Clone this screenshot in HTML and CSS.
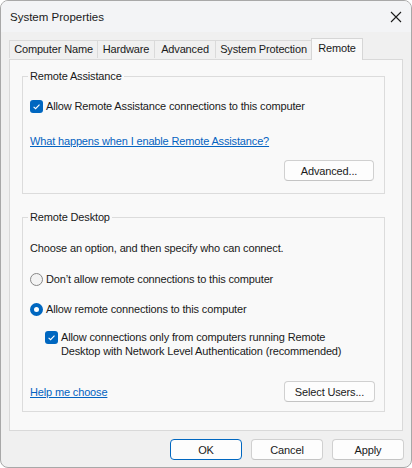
FILE: index.html
```html
<!DOCTYPE html>
<html>
<head>
<meta charset="utf-8">
<link rel="stylesheet" href="styles.css">
</head>
<body>
<div class="window">
  <div class="titlebar">
    <span class="title">System Properties</span>
    <svg class="close" width="12" height="12" viewBox="0 0 12 12"><path d="M1 1 L11 11 M11 1 L1 11" stroke="#1b1b1b" stroke-width="1.1" fill="none"/></svg>
  </div>
  <div class="tabs">
    <div class="tab t1">Computer Name</div>
    <div class="tab t2">Hardware</div>
    <div class="tab t3">Advanced</div>
    <div class="tab t4">System Protection</div>
    <div class="tab selected">Remote</div>
  </div>
  <div class="panel">
    <fieldset class="group g1">
      <legend>Remote Assistance</legend>
      <div class="row check-row r-ra">
        <span class="checkbox"><svg width="13" height="13" viewBox="0 0 13 13"><path d="M3.6 6.8 L5.6 8.7 L9.5 4.6" stroke="#fff" stroke-width="1.1" fill="none"/></svg></span>
        <span class="label">Allow Remote Assistance connections to this computer</span>
      </div>
      <div class="row r-link1"><a class="link">What happens when I enable Remote Assistance?</a></div>
      <div class="btn-row r-adv"><button class="btn">Advanced...</button></div>
    </fieldset>
    <fieldset class="group g2">
      <legend>Remote Desktop</legend>
      <div class="row r-choose">Choose an option, and then specify who can connect.</div>
      <div class="row check-row r-radio1">
        <span class="radio"></span>
        <span class="label">Don’t allow remote connections to this computer</span>
      </div>
      <div class="row check-row r-radio2">
        <span class="radio on"></span>
        <span class="label">Allow remote connections to this computer</span>
      </div>
      <div class="nla">
        <span class="checkbox"><svg width="13" height="13" viewBox="0 0 13 13"><path d="M3.6 6.8 L5.6 8.7 L9.5 4.6" stroke="#fff" stroke-width="1.1" fill="none"/></svg></span>
        <span class="nla-text">Allow connections only from computers running Remote<br>Desktop with Network Level Authentication (recommended)</span>
      </div>
      <div class="help-row">
        <a class="link">Help me choose</a>
        <button class="btn">Select Users...</button>
      </div>
    </fieldset>
  </div>
  <div class="buttons">
    <button class="btn default">OK</button>
    <button class="btn">Cancel</button>
    <button class="btn">Apply</button>
  </div>
</div>
</body>
</html>
```

FILE: styles.css
```css
* { box-sizing: border-box; }
html, body { margin: 0; padding: 0; background: #ffffff; }
body {
  font-family: "Liberation Sans", Arial, sans-serif;
  font-size: 11px;
  letter-spacing: -0.15px;
  color: #1a1a1a;
}
.window {
  width: 412px;
  height: 468px;
  border: 1px solid #a8a8a8;
  border-radius: 8px;
  background: #f0f0f0;
  overflow: hidden;
  display: flex;
  flex-direction: column;
}
.titlebar {
  height: 31px;
  flex: none;
  background: #f3f4f6;
  display: flex;
  align-items: center;
  justify-content: space-between;
  padding: 0 9px 0 9px;
}
.title { font-size: 11.5px; letter-spacing: 0; color: #1a1a1a; }
.close { display: block; margin-top: 1px; }
.tabs {
  display: flex;
  align-items: flex-end;
  height: 21px;
  margin-top: 6px;
  padding-left: 8px;
  position: relative;
  z-index: 1;
}
.tab {
  height: 18px;
  line-height: 17px;
  text-align: center;
  border: 1px solid #dadada;
  border-right: none;
  border-bottom: none;
  background: #f0f0f0;
  white-space: nowrap;
  margin-bottom: 1px;
}
.t1 { width: 88px; }
.t2 { width: 57px; }
.t3 { width: 61px; }
.t4 { width: 97px; border-right: 1px solid #dadada; }
.tab.selected {
  width: 52px;
  height: 22px;
  line-height: 19px;
  border: 1px solid #d6d6d6;
  border-bottom: none;
  background: #f9f9f9;
  margin-bottom: -1px;
  margin-left: -1px;
}
.panel {
  height: 372px;
  margin: 0 8px;
  flex: none;
  border: 1px solid #d9d9d9;
  background: #f9f9f9;
  padding: 8px 17px 0 12px;
}
.group {
  margin: 0;
  padding: 0 0 0 7px;
  border: 1px solid #dcdcdc;
  display: flex;
  flex-direction: column;
}
.group legend {
  margin-left: -2px;
  padding: 0 2px;
  line-height: 16px;
}
.g1 { padding-bottom: 12px; }
.g2 { margin-top: 15px; padding-bottom: 9px; }
.row {
  height: 20px;
  display: flex;
  align-items: center;
  white-space: nowrap;
}
.check-row .label { margin-left: 3px; }
.r-ra { margin-top: 12px; }
.r-link1 { margin-top: 15px; }
.r-adv { margin-top: 9px; }
.btn-row { display: flex; justify-content: flex-end; padding-right: 10px; }
.r-choose { margin-top: 13px; }
.r-radio1 { margin-top: 11px; }
.r-radio2 { margin-top: 10px; }
.checkbox {
  width: 13px;
  height: 13px;
  border-radius: 3px;
  background: #0067c0;
  flex: none;
  display: block;
}
.checkbox svg { display: block; }
.radio {
  width: 13px;
  height: 13px;
  border-radius: 50%;
  border: 1px solid #878787;
  background: #f3f3f3;
  flex: none;
  display: block;
}
.radio.on {
  border: 4px solid #0067c0;
  background: #ffffff;
}
.link {
  color: #0463c1;
  text-decoration: underline;
  cursor: pointer;
}
.nla {
  display: flex;
  align-items: flex-start;
  margin-top: 12px;
  padding-left: 15px;
}
.nla-text { line-height: 14px; margin-left: 3px; margin-top: -1px; white-space: nowrap; }
.help-row {
  display: flex;
  justify-content: space-between;
  align-items: center;
  margin-top: 23px;
  padding-right: 9px;
}
.btn {
  font-family: inherit;
  font-size: 11px;
  letter-spacing: -0.15px;
  color: #1a1a1a;
  height: 21px;
  background: #fdfdfd;
  border: 1px solid #d0d0d0;
  border-bottom-color: #c4c4c4;
  border-radius: 4px;
  padding: 0;
  margin: 0;
}
.r-adv .btn { width: 90px; }
.help-row .btn { width: 91px; }
.buttons {
  display: flex;
  justify-content: flex-end;
  gap: 9px;
  padding-right: 7px;
  margin-top: 8px;
}
.buttons .btn { width: 72px; }
.btn.default { border-color: #0067c0; }
```
